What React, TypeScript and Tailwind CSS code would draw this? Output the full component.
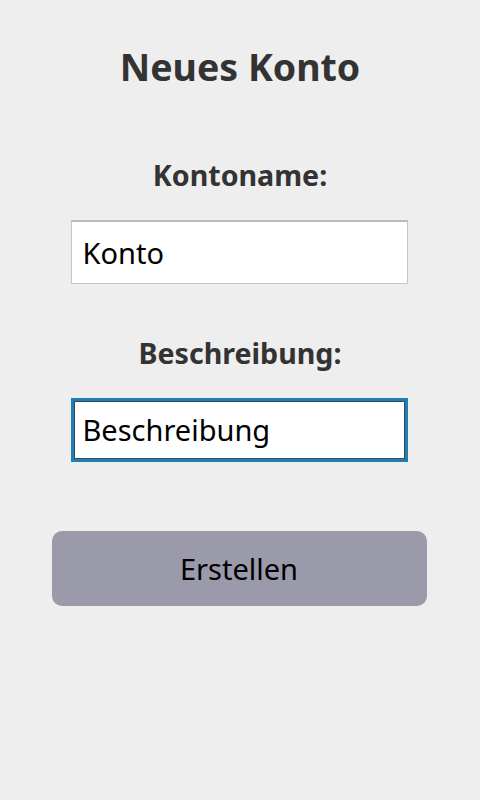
export default function App() {
  return (
    <div
      className="min-h-[800px] w-full bg-[#eeeeee] text-[#333333] flex flex-col items-center"
      style={{ fontFamily: '"Noto Sans", "Open Sans", sans-serif' }}
    >
      <h1 className="mt-[42px] text-[37.5px] leading-[50px] font-bold text-[#333333]">Neues Konto</h1>

      <label className="mt-[64px] text-[28.6px] leading-[38px] font-bold">Kontoname:</label>
      <div className="mt-[26px] mr-[2px] flex h-[64px] w-[337px] items-center border border-[#c4c6ca] border-t-2 border-t-[#b8bcc2] bg-white pl-[11px] text-[29px] text-black">
        Konto
      </div>

      <label className="mt-[50px] text-[28.6px] leading-[38px] font-bold">Beschreibung:</label>
      <div className="mt-[26px] mr-[2px] flex h-[64px] w-[337px] items-center border-[3px] border-[#1f7fb4] bg-white pl-[9px] text-[29px] text-black shadow-[inset_0_0_0_1px_#3a4a55]">
        Beschreibung
      </div>

      <button className="mt-[69px] mr-[2px] flex h-[75px] w-[375px] items-center justify-center rounded-[10px] bg-[#9b9aaa] text-[29px] text-black">
        Erstellen
      </button>
    </div>
  );
}
